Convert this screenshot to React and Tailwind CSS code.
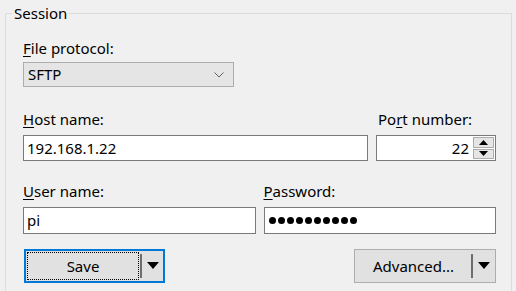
import React from 'react'

const font = { fontFamily: '"Segoe UI", "Noto Sans", sans-serif' }

const Label = ({ k, rest, pre = '' }) => (
  <div className="h-[20px] leading-[20px] text-[15px] text-black">
    {pre}
    <u className="underline-offset-2">{k}</u>
    {rest}
  </div>
)

const Arrow = () => (
  <svg width="12" height="7" viewBox="0 0 12 7">
    <path d="M0 0 H12 L6 7 Z" fill="#000" />
  </svg>
)

const SplitButton = ({ label, focused, className }) => (
  <div
    className={
      'flex h-[34px] ' +
      (focused ? 'border-2 border-[#0078d7] bg-[#e1e1e1]' : 'border border-[#adadad] bg-[#e1e1e1] p-px') +
      ' ' +
      className
    }
  >
    <div className="flex flex-1 p-px">
      <div
        className={
          'flex flex-1 items-center justify-center text-[15px] ' +
          (focused ? 'border border-dotted border-black' : '')
        }
      >
        {label}
      </div>
    </div>
    <div className="my-[3px] w-[2px] bg-[#6d6d6d]" />
    <div className="flex w-[21px] items-center justify-center pb-px">
      <Arrow />
    </div>
  </div>
)

const App = () => {
  return (
    <div className="h-[291px] w-[516px] overflow-hidden bg-[#f0f0f0] text-black" style={font}>
      <div className="relative ml-[5px] mt-[13px] h-[300px] w-[507px] border border-[#dcdcdc]">
        {/* group caption */}
        <div className="absolute left-[6px] top-[-11px] bg-[#f0f0f0] px-[2px] text-[15px] leading-[20px]">
          Session
        </div>

        <div className="pl-[17px] pr-[15px] pt-[24px]">
          {/* protocol */}
          <Label k="F" rest="ile protocol:" />
          <div className="mt-[4px] flex h-[25px] w-[211px] items-center justify-between border border-[#adadad] bg-[#e5e5e5] pl-[4px] pr-[9px] text-[15px]">
            <span>SFTP</span>
            <svg width="10" height="6" viewBox="0 0 10 6">
              <path d="M0.5 0.5 L5 5 L9.5 0.5" fill="none" stroke="#606060" strokeWidth="1" />
            </svg>
          </div>

          {/* host + port */}
          <div className="mt-[22px] flex gap-[8px]">
            <div className="w-[345px]">
              <Label k="H" rest="ost name:" />
              <div className="mt-[6px] flex h-[26px] items-center border border-[#7a7a7a] bg-white pl-[3px] text-[15px]">
                192.168.1.22
              </div>
            </div>
            <div className="w-[120px]">
              <div className="pl-[2px]">
                <Label pre="Po" k="r" rest="t number:" />
              </div>
              <div className="mt-[6px] flex h-[26px] items-center border border-[#7a7a7a] bg-white pr-px">
                <span className="flex-1 pr-[4px] text-right text-[15px]">22</span>
                <div className="flex h-[22px] w-[21px] flex-col gap-px">
                  <div className="flex flex-1 items-center justify-center border border-[#adadad] bg-[#e5e5e5]">
                    <svg width="9" height="5" viewBox="0 0 9 5">
                      <path d="M0 5 H9 L4.5 0 Z" fill="#000" />
                    </svg>
                  </div>
                  <div className="flex flex-1 items-center justify-center border border-[#adadad] bg-[#e5e5e5]">
                    <svg width="9" height="5" viewBox="0 0 9 5">
                      <path d="M0 0 H9 L4.5 5 Z" fill="#000" />
                    </svg>
                  </div>
                </div>
              </div>
            </div>
          </div>

          {/* user + password */}
          <div className="mt-[20px] flex gap-[8px]">
            <div className="w-[233px]">
              <Label k="U" rest="ser name:" />
              <div className="mt-[6px] flex h-[27px] items-center border border-[#7a7a7a] bg-white pl-[3px] text-[15px]">
                pi
              </div>
            </div>
            <div className="w-[233px]">
              <Label k="P" rest="assword:" />
              <div className="mt-[6px] flex h-[27px] items-center gap-[2px] border border-[#7a7a7a] bg-white pl-[4px]">
                {Array.from({ length: 10 }).map((_, i) => (
                  <span key={i} className="h-[7px] w-[7px] rounded-full bg-black" />
                ))}
              </div>
            </div>
          </div>

          {/* buttons */}
          <div className="mt-[15px] flex justify-between">
            <SplitButton label="Save" focused className="ml-px w-[141px]" />
            <SplitButton label="Advanced..." className="w-[142px]" />
          </div>
        </div>
      </div>
    </div>
  )
}

export default App
